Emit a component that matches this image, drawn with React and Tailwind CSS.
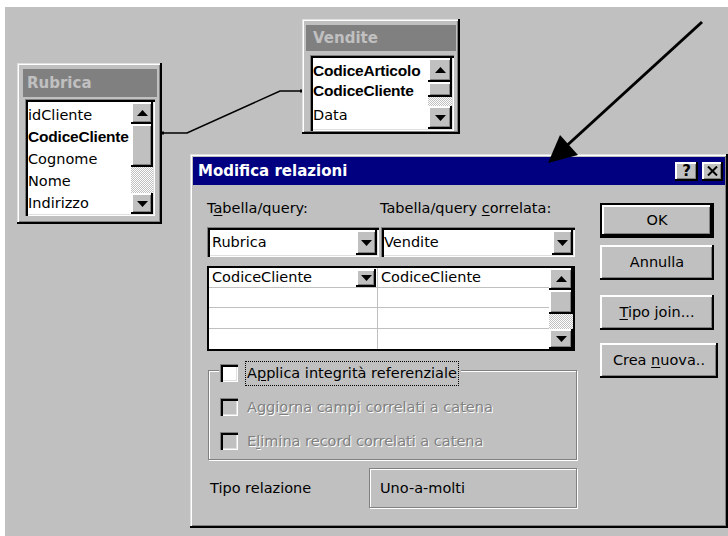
import React from "react";

// Win98-style bevels
const raised =
  "shadow-[inset_-2px_-2px_0_#000,inset_2px_2px_0_#fff,inset_-3px_-3px_0_#808080]";
const sunken =
  "shadow-[inset_1px_1px_0_#808080,inset_3px_3px_0_#000,inset_-1px_-1px_0_#fff,inset_-2px_-2px_0_#dfdfdf]";
const frame =
  "shadow-[inset_-2px_-2px_0_#000,inset_1px_1px_0_#dfdfdf,inset_2px_2px_0_#fff,inset_-3px_-3px_0_#808080]";
const etched = "border border-[#808080] shadow-[inset_1px_1px_0_#fff,1px_1px_0_#fff]";
const disabledText = "text-[#808080] [text-shadow:1px_1px_0_#fff]";
const boldList = "font-['Liberation_Sans',sans-serif] font-bold text-[15.5px] tracking-[-0.2px]";

function Tri({ up = false }) {
  return (
    <svg width="11" height="6" viewBox="0 0 11 6">
      {up ? (
        <polygon points="0,6 11,6 5.5,0" fill="#000" />
      ) : (
        <polygon points="0,0 11,0 5.5,6" fill="#000" />
      )}
    </svg>
  );
}

function ScrollBar({ className, up, thumb, down }) {
  return (
    <div className={"flex shrink-0 flex-col " + className}>
      <div className={"flex items-center justify-center bg-[#c0c0c0] " + raised + " " + up}>
        <Tri up />
      </div>
      <div className={"bg-[#c0c0c0] " + raised + " " + thumb} />
      <div className="flex-1 bg-[repeating-conic-gradient(#c0c0c0_0%_25%,#ffffff_0%_50%)] bg-[length:2px_2px]" />
      <div className={"flex items-center justify-center bg-[#c0c0c0] " + raised + " " + down}>
        <Tri />
      </div>
    </div>
  );
}

function DropButton({ className }) {
  return (
    <div className={"flex shrink-0 items-center justify-center bg-[#c0c0c0] " + raised + " " + className}>
      <Tri />
    </div>
  );
}

function Combo({ className, pad, children }) {
  return (
    <div className={"flex bg-white pt-[3px] pl-[3px] pb-[2px] pr-[2px] " + sunken + " " + className}>
      <div className={"flex flex-1 items-center " + pad}>{children}</div>
      <DropButton className="w-[21px]" />
    </div>
  );
}

function Check({ disabled = false }) {
  return (
    <div
      className={
        "h-[18px] w-[18px] shrink-0 " + (disabled ? "bg-[#c0c0c0] " : "bg-white ") + sunken
      }
    />
  );
}

function Button({ className, children }) {
  return (
    <div className={"flex h-[35px] items-center justify-center bg-[#c0c0c0] " + raised + " " + className}>
      <span className="whitespace-pre">{children}</span>
    </div>
  );
}

function U({ children }) {
  return <span className="underline decoration-1 underline-offset-[2px]">{children}</span>;
}

function Rubrica() {
  return (
    <div
      className={
        "absolute left-[17px] top-[63px] flex h-[161px] w-[145px] flex-col bg-[#c0c0c0] pt-[6px] pl-[6px] pr-[5px] pb-[9px] " +
        frame
      }
    >
      <div className="flex h-[28px] shrink-0 items-center bg-[#808080] pl-[4px] text-[15px] font-bold text-[#c0c0c0]">
        Rubrica
      </div>
      <div className={"mx-[2px] mt-[2px] flex flex-1 bg-white pt-[3px] pl-[3px] pb-[2px] pr-[2px] " + sunken}>
        <div className="flex flex-1 flex-col overflow-hidden pt-[2px] whitespace-nowrap">
          <div className="flex h-[22px] items-center">idCliente</div>
          <div className={"flex h-[22px] items-center " + boldList}>CodiceCliente</div>
          <div className="flex h-[22px] items-center">Cognome</div>
          <div className="flex h-[22px] items-center">Nome</div>
          <div className="flex h-[22px] items-center">Indirizzo</div>
        </div>
        <ScrollBar className="w-[22px]" up="h-[22px]" thumb="h-[43px]" down="h-[21px]" />
      </div>
    </div>
  );
}

function Vendite() {
  return (
    <div
      className={
        "absolute left-[302px] top-[19px] flex h-[115px] w-[158px] flex-col bg-[#c0c0c0] pt-[6px] pl-[4px] pr-[4px] pb-[4px] " +
        frame
      }
    >
      <div className="flex h-[26px] shrink-0 items-center bg-[#808080] pl-[7px] text-[15px] font-bold text-[#c0c0c0]">
        Vendite
      </div>
      <div className={"ml-[4px] mr-[2px] mt-[4px] flex flex-1 bg-white pt-[3px] pl-[3px] pb-[2px] pr-[2px] " + sunken}>
        <div className="flex flex-1 flex-col overflow-hidden pt-[3px] whitespace-nowrap">
          <div className={"flex h-[20px] items-center " + boldList}>CodiceArticolo</div>
          <div className={"flex h-[20px] items-center " + boldList}>CodiceCliente</div>
          <div className="flex h-[28px] items-center">Data</div>
        </div>
        <ScrollBar className="w-[24px]" up="h-[24px]" thumb="h-[15px]" down="h-[23px]" />
      </div>
    </div>
  );
}

function Dialog() {
  return (
    <div
      className={
        "absolute left-[190px] top-[154px] flex h-[374px] w-[538px] flex-col bg-[#c0c0c0] p-[3px] " + frame
      }
    >
      {/* title bar */}
      <div className="flex h-[28px] shrink-0 items-center bg-[#000080] pl-[5px] pr-[2px]">
        <span className="text-[15px] font-bold text-white">Modifica relazioni</span>
        <div className="ml-auto flex gap-[4px]">
          <div
            className={
              "flex h-[19px] w-[23px] items-center justify-center bg-[#c0c0c0] text-[15px] font-bold text-black " +
              raised
            }
          >
            ?
          </div>
          <div className={"flex h-[19px] w-[21px] items-center justify-center bg-[#c0c0c0] " + raised}>
            <svg width="11" height="10" viewBox="0 0 11 10">
              <path d="M1 0.5 L10 9.5 M10 0.5 L1 9.5" stroke="#000" strokeWidth="2" />
            </svg>
          </div>
        </div>
      </div>

      <div className="flex pl-[14px] pt-[13px]">
        {/* left column */}
        <div className="flex w-[370px] flex-col">
          <div className="flex h-[20px] items-center whitespace-nowrap">
            <span className="w-[173px]">
              T<U>a</U>bella/query:
            </span>
            <span>
              Tabella/query <U>c</U>orrelata:
            </span>
          </div>

          <div className="mt-[9px] flex h-[30px]">
            <Combo className="w-[172px]" pad="pl-[2px]">
              Rubrica
            </Combo>
            <Combo className="ml-[2px] w-[194px]" pad="pl-[0px]">
              Vendite
            </Combo>
          </div>

          {/* field mapping grid */}
          <div className="mt-[9px] flex h-[85px] w-[368px] border-2 border-black bg-white">
            <div className="flex flex-1 flex-col">
              <div className="flex h-[20px] border-b border-[#c0c0c0]">
                <div className="flex w-[169px] items-center border-r border-[#c0c0c0] pl-[3px]">
                  CodiceCliente
                  <DropButton className="ml-auto mr-[1px] h-[18px] w-[20px]" />
                </div>
                <div className="flex flex-1 items-center pl-[3px]">CodiceCliente</div>
              </div>
              <div className="flex h-[20px] border-b border-[#c0c0c0]">
                <div className="w-[169px] border-r border-[#c0c0c0]" />
              </div>
              <div className="flex h-[21px] border-b border-[#c0c0c0]">
                <div className="w-[169px] border-r border-[#c0c0c0]" />
              </div>
              <div className="flex h-[20px]">
                <div className="w-[169px] border-r border-[#c0c0c0]" />
              </div>
            </div>
            <ScrollBar className="w-[24px]" up="h-[22px]" thumb="h-[24px]" down="h-[20px]" />
          </div>

          {/* referential integrity group */}
          <div className={"ml-[1px] mt-[19px] flex h-[90px] w-[369px] flex-col " + etched}>
            <div className="-mt-[15px] flex h-[34px] items-center">
              <div className="ml-[10px] flex items-center bg-[#c0c0c0] pl-[1px] pr-[2px]">
                <Check />
                <span className="ml-[7px] flex h-[25px] items-center border border-dotted border-black px-[1px] whitespace-nowrap">
                  <span className="whitespace-pre">
                    A<U>p</U>plica integrità referenziale
                  </span>
                </span>
              </div>
            </div>
            <div className="flex h-[34px] items-center pl-[11px]">
              <Check disabled />
              <span className={"ml-[9px] whitespace-nowrap " + disabledText}>
                Aggi<U>o</U>rna campi correlati a catena
              </span>
            </div>
            <div className="flex h-[34px] items-center pl-[11px]">
              <Check disabled />
              <span className={"ml-[9px] whitespace-nowrap " + disabledText}>
                E<U>l</U>imina record correlati a catena
              </span>
            </div>
          </div>

          <div className="mt-[8px] flex h-[40px]">
            <div className="flex w-[162px] items-center pl-[3px]">Tipo relazione</div>
            <div className={"flex w-[208px] items-center pl-[10px] " + etched}>Uno-a-molti</div>
          </div>
        </div>

        {/* command buttons */}
        <div className="ml-[23px] flex flex-col items-start pt-[5px]">
          <div className="h-[35px] w-[114px] border-2 border-black">
            <div className={"flex h-full items-center justify-center bg-[#c0c0c0] " + raised}>OK</div>
          </div>
          <Button className="mt-[7px] w-[114px]">Annulla</Button>
          <Button className="mt-[15px] w-[114px]">
            <U>T</U>ipo join...
          </Button>
          <Button className="mt-[13px] w-[118px]">
            Crea <U>n</U>uova..
          </Button>
        </div>
      </div>
    </div>
  );
}

export default function App() {
  return (
    <div className="relative h-[536px] w-[728px] overflow-hidden bg-white pl-[5px] pt-[7px] font-['DejaVu_Sans',sans-serif] text-[14.5px] leading-none text-black">
      <div className="h-[529px] w-[723px] bg-[#c0c0c0]" />

      {/* join line between the two field lists */}
      <svg className="pointer-events-none absolute left-0 top-0" width="728" height="536">
        <polyline points="162,133 187,133 280,91 302,91" fill="none" stroke="#000" strokeWidth="1.5" />
        <rect x="161" y="131.5" width="3" height="3" fill="#000" />
        <rect x="300" y="89.5" width="3" height="3" fill="#000" />
      </svg>

      <Rubrica />
      <Vendite />
      <Dialog />

      {/* pointer arrow */}
      <svg className="pointer-events-none absolute left-0 top-0" width="728" height="536">
        <line x1="702" y1="22" x2="562" y2="150" stroke="#000" strokeWidth="3" />
        <polygon points="548,163 560,135 578,155" fill="#000" />
      </svg>
    </div>
  );
}
